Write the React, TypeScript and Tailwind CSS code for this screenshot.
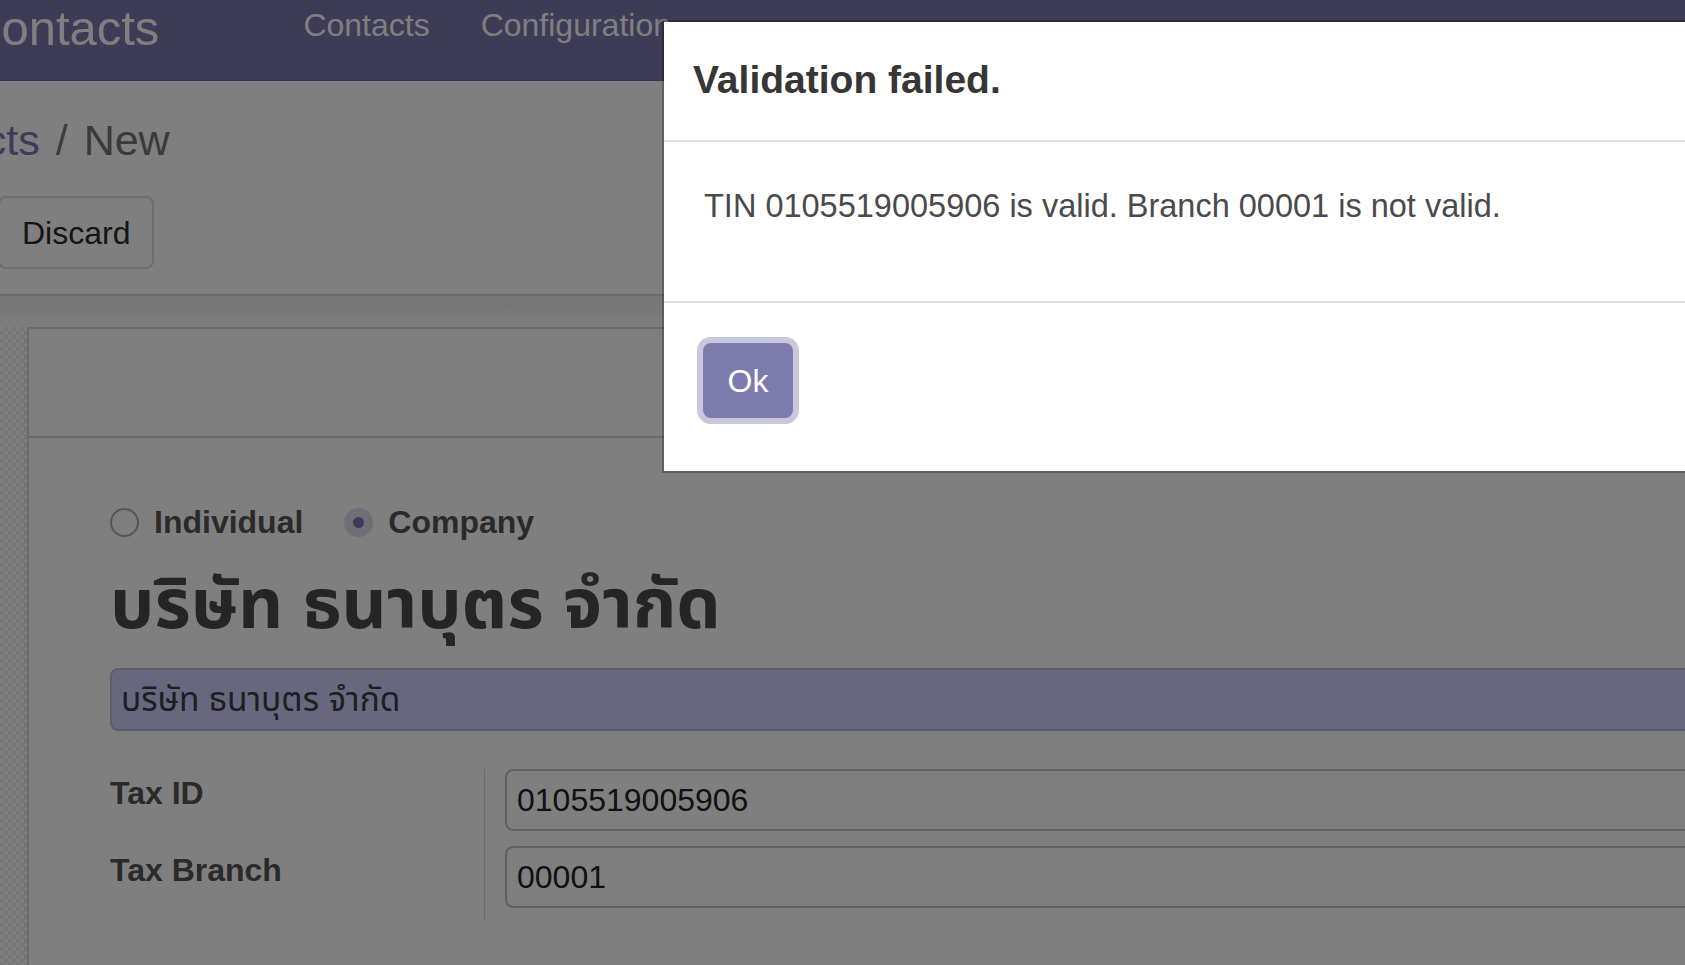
const thai = "บริษัท ธนาบุตร จำกัด";

const Radio = ({ label, checked }: { label: string; checked?: boolean }) => (
  <label className="flex items-center gap-[15px]">
    {checked ? (
      <span className="flex h-[29px] w-[29px] items-center justify-center rounded-full bg-[#dedeea]">
        <span className="h-[11px] w-[11px] rounded-full bg-[#7a76b8]" />
      </span>
    ) : (
      <span className="h-[29px] w-[29px] rounded-full border-2 border-[#acacac] bg-white" />
    )}
    <span className="text-[32px] font-bold leading-[40px] text-[#555]">{label}</span>
  </label>
);

const Field = ({ label, value, last }: { label: string; value: string; last?: boolean }) => (
  <div className="flex">
    <div className="w-[374px] shrink-0 pt-[4px] text-[32px] font-bold leading-[40px] text-[#555]">
      {label}
    </div>
    <div className={"flex-1 border-l border-[#dadada] pl-[20px] " + (last ? "pb-[13px]" : "pb-[15px]")}>
      <div className="flex h-[62px] items-center rounded-lg border-2 border-[#c4c4c4] bg-white pl-[10px] text-[32px] leading-[40px] text-[#222]">
        {value}
      </div>
    </div>
  </div>
);

export default function App() {
  return (
    <div className="relative h-[965px] w-full overflow-hidden bg-white font-['Liberation_Sans','Noto_Sans_Thai','DejaVu_Sans',sans-serif]">
      {/* top navbar */}
      <nav className="flex h-[81px] items-start border-b border-[#68649a] bg-[#7a76aa] text-white">
        <div className="-ml-[34px] whitespace-nowrap text-[49px] leading-[56px]">Contacts</div>
        <div className="ml-[144px] flex gap-[51px] pt-[6px] text-[32px] leading-[38px]">
          <span>Contacts</span>
          <span>Configuration</span>
        </div>
      </nav>

      {/* control panel */}
      <div className="border-b-2 border-[#d6d6d6] pb-[25px] pt-[34px]">
        <div className="-ml-[130px] flex whitespace-nowrap text-[43px] leading-[50px]">
          <span className="text-[#7c74b4]">Contacts</span>
          <span className="mx-4 text-[#7a7a7a]">/</span>
          <span className="text-[#747474]">New</span>
        </div>
        <div className="mt-[31px] flex">
          <button className="-ml-[2px] flex h-[73px] items-center rounded-lg border-2 border-[#dcdcdc] bg-white pl-[22px] pr-[22px] text-[32px] leading-[40px] text-[#2a2a2a]">
            Discard
          </button>
        </div>
      </div>

      <div className="h-[31px] bg-gradient-to-b from-[#eaeaea] to-[#fbfbfb]" />

      {/* form */}
      <div className="flex h-[700px]">
        <div className="w-[27px] shrink-0 bg-[repeating-conic-gradient(#ececec_0%_25%,#ffffff_0%_50%)] bg-[length:8px_8px]" />
        <div className="min-w-[1800px] border-l-2 border-t-2 border-[#d4d4d4] bg-white">
          <div className="h-[109px] border-b-2 border-[#d4d4d4]" />
          <div className="pl-[81px] pt-[64px]">
            <div className="flex gap-[41px]">
              <Radio label="Individual" />
              <Radio label="Company" checked />
            </div>
            <h1 className="mt-[16px] text-[70px] font-bold leading-[92px] text-[#4a4a4a]">{thai}</h1>
            <div className="mt-[18px] flex h-[63px] items-center rounded-lg border-2 border-[#babad2] bg-[#ceceff] pl-[9px] text-[33.5px] leading-[40px] text-[#3c3c3c]">
              {thai}
            </div>
            <div className="mt-[38px]">
              <Field label="Tax ID" value="0105519005906" />
              <Field label="Tax Branch" value="00001" last />
            </div>
          </div>
        </div>
      </div>

      {/* backdrop */}
      <div className="absolute inset-0 bg-black/50" />

      {/* dialog */}
      <div className="absolute left-[662px] top-[20px] w-[1100px] border-2 border-black/25 bg-white bg-clip-padding">
        <div className="border-b-2 border-[#dee2e6] pb-[37px] pl-[29px] pt-[35px]">
          <h4 className="text-[39px] font-bold leading-[46px] text-[#363636]">Validation failed.</h4>
        </div>
        <div className="pb-[75px] pl-[40px] pt-[44px] text-[32.5px] leading-[40px] text-[#4a4a4a]">
          TIN 0105519005906 is valid. Branch 00001 is not valid.
        </div>
        <div className="border-t-2 border-[#dee2e6] pb-[53px] pl-[39px] pt-[40px]">
          <button className="h-[75px] w-[90px] rounded-lg bg-[#7c7bad] text-[32px] text-white shadow-[0_0_0_6px_#c8c7dc]">
            Ok
          </button>
        </div>
      </div>
    </div>
  );
}
